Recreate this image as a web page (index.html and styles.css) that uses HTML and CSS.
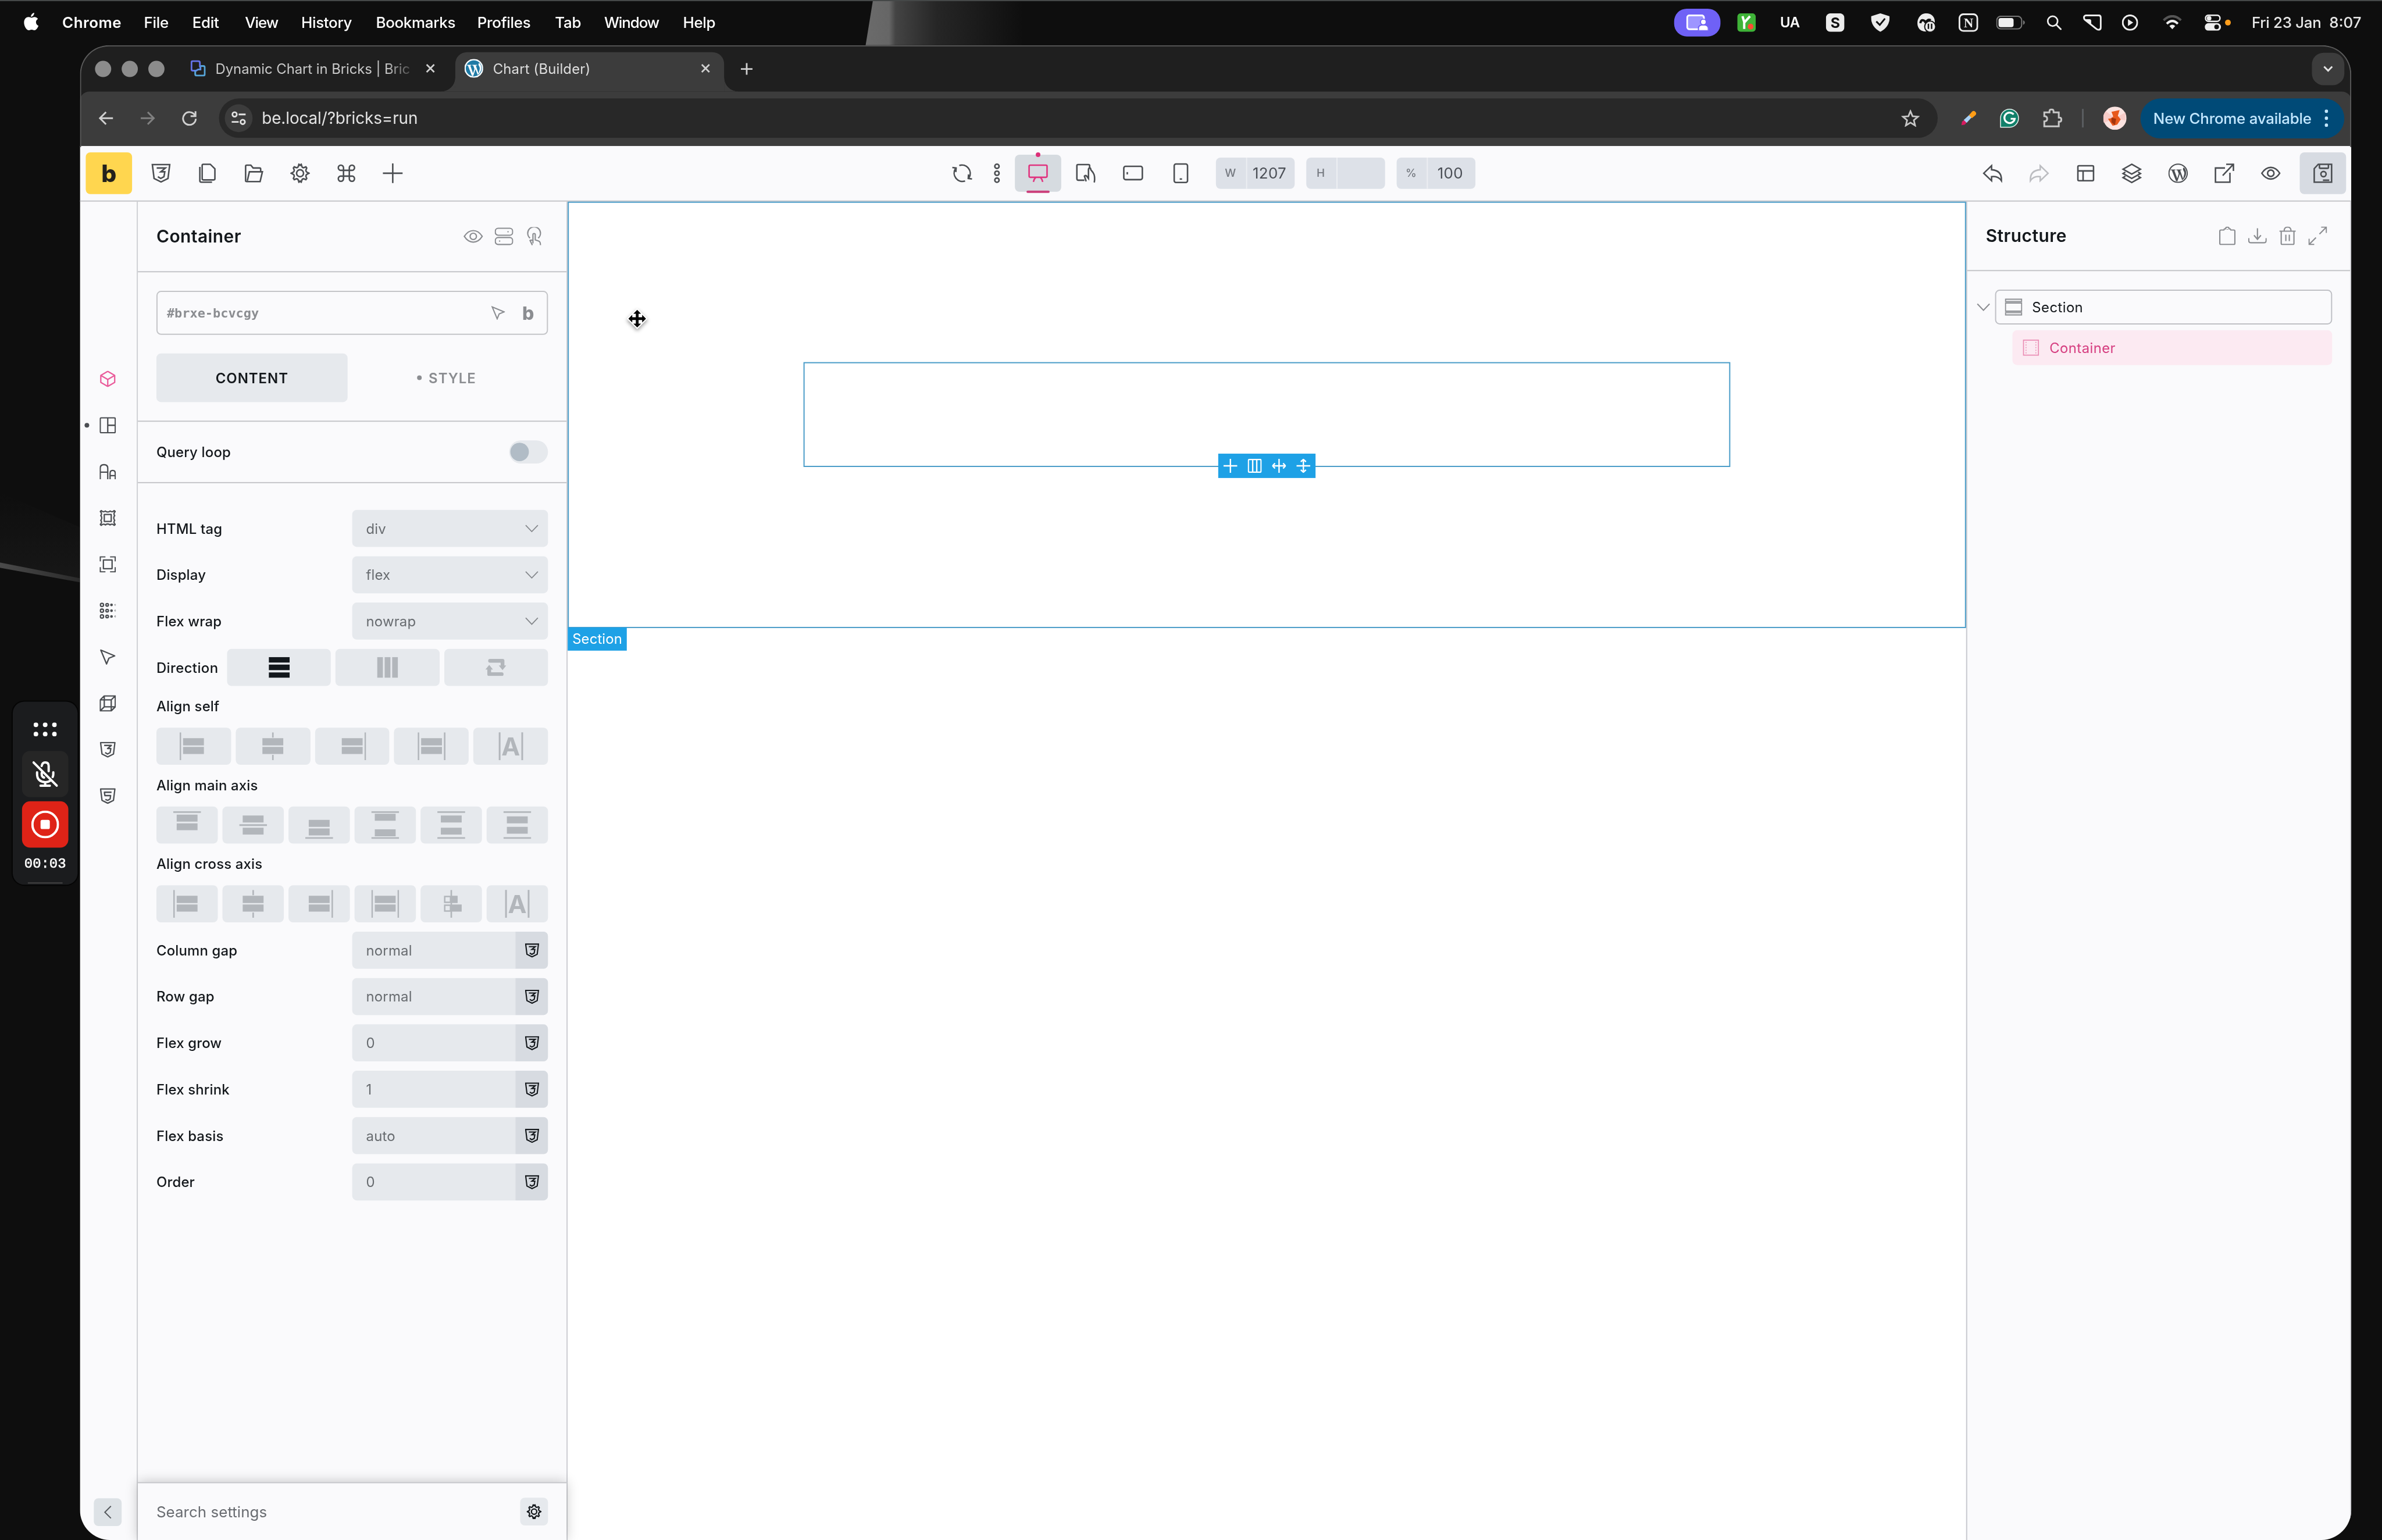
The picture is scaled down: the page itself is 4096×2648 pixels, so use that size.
FILE: index.html
```html
<!DOCTYPE html>
<html lang="en">
<head>
<meta charset="utf-8">
<title>Chart (Builder)</title>
<link rel="stylesheet" href="styles.css">
</head>
<body>
<svg class="defs" aria-hidden="true">
  <symbol id="css3" viewBox="0 0 34 34"><path d="M2 2h30l-3 24-12 6-12-6z"/><path d="M9.500 8h15l-8 6.500h7l-1.500 8.500-5.500 3-5-3"/></symbol>
  <symbol id="html5" viewBox="0 0 34 34"><path d="M2 2h30l-3 24-12 6-12-6z"/><path d="M25 9H10l1 7h12l-1 7-5 3-5-2"/></symbol>
  <symbol id="gear" viewBox="0 0 34 34"><path d="M14 5l1-3.5 2 2 2-2L20 5q1 2.500 3 2.500L27 6l1.500 2L27 11.500q0 2.500 1.500 3.500l4 2-4 2q-1.500 1-1.500 3.500L28.500 26 27 28l-4-1.500q-2 0-3 2.500l-1 3.500-2-2-2 2L14 29q-1-2.500-3-2.500L7 28l-1.500-2L7 22.500Q7 20 5.500 19l-4-2 4-2Q7 14 7 11.500L5.500 8 7 6l4 1.500q2 0 3-2.500z"/><circle cx="17" cy="17" r="6"/></symbol>
  <symbol id="wp" viewBox="0 0 34 34"><circle cx="17" cy="17" r="15.800" stroke-width="2"/><path stroke="none" fill="currentColor" d="M4 10.500h8.500v1.200l-2 .3 5 14 2.600-8L16 12l-2-.3v-1.200h9v1.200l-2.400.3 5 14.500 2-7.500c.8-3-.4-5-1.600-7-1-1.800-.8-4 1-4.800 6 5.500 5 17-3 21.800L20 18.500 15.800 31l-2.400-.5L6.200 12 4 11.700z"/></symbol>
  <symbol id="eye" viewBox="0 0 34 24"><path d="M1.500 12Q8 2 17 2t15.500 10Q26 22 17 22T1.500 12z"/><circle cx="17" cy="12" r="5.500"/></symbol>
  <symbol id="arrowcur" viewBox="0 0 28 28"><path d="M2 2l24 10-10 4-4 10z"/></symbol>
  <symbol id="chev" viewBox="0 0 24 14"><path d="M1.500 1.500L12 12.500 22.500 1.500"/></symbol>
  <symbol id="a-start" viewBox="0 0 48 48"><path d="M0 0h2.700v48H0zM6 10h36v12.500H6zM6 25h36v12.500H6z"/></symbol>
  <symbol id="a-center" viewBox="0 0 48 48"><path d="M22.700 0h2.700v9h-2.700zM22.700 39h2.700v9h-2.700zM6 10h36v12.500H6zM6 25h36v12.500H6z"/></symbol>
  <symbol id="a-end" viewBox="0 0 48 48"><path d="M45.300 0H48v48h-2.700zM6 10h36v12.500H6zM6 25h36v12.500H6z"/></symbol>
  <symbol id="a-stretch" viewBox="0 0 48 48"><path d="M0 0h2.700v48H0zM45.300 0H48v48h-2.700zM6 10h36v12.500H6zM6 25h36v12.500H6z"/></symbol>
  <symbol id="a-first" viewBox="0 0 48 48"><path d="M22.700 0h2.700v48h-2.700zM24 10h11v12.500H24zM24 25h18v12.500H24z"/><path d="M12.700 11.300h10v10h-10zM12.700 26.300h10v10h-10z" fill="none" stroke="currentColor" stroke-width="2.500"/></symbol>
  <symbol id="m-start" viewBox="0 0 48 48"><path d="M0 0h48v3H0zM6 6h36v12H6zM6 21h36v12H6z"/></symbol>
  <symbol id="m-center" viewBox="0 0 48 48"><path d="M0 22.500h48v3H0zM6 7.500h36v12H6zM6 28.500h36v12H6z"/></symbol>
  <symbol id="m-end" viewBox="0 0 48 48"><path d="M0 45h48v3H0zM6 15h36v12H6zM6 30h36v12H6z"/></symbol>
  <symbol id="m-between" viewBox="0 0 48 48"><path d="M0 0h48v3H0zM0 45h48v3H0zM6 4.500h36v12H6zM6 31.500h36v12H6z"/></symbol>
  <symbol id="m-around" viewBox="0 0 48 48"><path d="M0 0h48v3H0zM0 45h48v3H0zM6 7.500h36v12H6zM6 28.500h36v12H6z"/></symbol>
  <symbol id="m-evenly" viewBox="0 0 48 48"><path d="M0 0h48v3H0zM0 45h48v3H0zM6 9h36v12H6zM6 27h36v12H6z"/></symbol>
</svg>

<div class="screen">
  <svg class="wallpaper" viewBox="0 0 4112 2658" preserveAspectRatio="none">
    <defs>
      <linearGradient id="beam" x1="0" x2="1"><stop offset="0" stop-color="#6b6b6b"/><stop offset=".15" stop-color="#666"/><stop offset=".19" stop-color="#444"/><stop offset=".45" stop-color="#262626"/><stop offset="1" stop-color="#0e0e0e"/></linearGradient>
      <linearGradient id="trail" x1="0" x2="1"><stop offset="0" stop-color="#4a4a4a"/><stop offset="1" stop-color="#2a2a2a"/></linearGradient>
      <linearGradient id="glow" x1="0" x2="0" y1="0" y2="1"><stop offset="0" stop-color="#0e0e0e"/><stop offset="1" stop-color="#171717"/></linearGradient>
    </defs>
    <path d="M1507 0h260v80h-273z" fill="url(#beam)"/>
    <path d="M0 850l138 60v88L0 972z" fill="url(#glow)"/>
    <path d="M0 971l138 27v7L0 980z" fill="url(#trail)"/>
    <path d="M0 0h4112v2H0z" fill="#454848"/>
  </svg>

  <header class="menubar">
    <nav class="menus">
      <svg class="apple" viewBox="0 0 26 31"><path d="M18 0c.3 3-2.200 6.800-5.600 6.900C12 4 15 .5 18 0zM13.500 8.600c1.200 0 2.700-1.300 5-1.300 2 0 4.500 1 6 3.200-5 2.900-4.300 9.800.9 12-1 2.900-3.900 7.800-6.800 7.800-1.800 0-2.700-1.100-5-1.100s-3.300 1.100-5 1.100C4.800 30.300.5 23.500.5 17 .5 10.500 4.500 7.400 8.300 7.400c2.200 0 3.900 1.200 5.200 1.200z" fill="#fff"/></svg>
      <b>Chrome</b><span>File</span><span>Edit</span><span class="tight">View</span><span>History</span><span>Bookmarks</span><span>Profiles</span><span>Tab</span><span class="tight">Window</span><span>Help</span>
    </nav>
    <div class="status">
      <span class="share"><svg width="38" height="28" viewBox="0 0 38 28"><rect x="1.500" y="1.500" width="29" height="24" rx="4" fill="#9d95ff" stroke="#fff" stroke-width="3"/><g fill="#fff" stroke="#6f61f6" stroke-width="2"><path d="M21 28v-4q0-6 8.500-6t8.500 6v4z"/><circle cx="29.500" cy="13" r="5"/></g></svg></span>
      <svg width="32" height="32" viewBox="0 0 32 32"><rect width="32" height="32" rx="6" fill="#3fb338"/><path d="M9 5l3 10M22 5L12 16v11" stroke="#fff" stroke-width="4" fill="none"/><circle cx="23" cy="23" r="5" fill="#ff4b34"/></svg>
      <b class="ua">UA</b>
      <svg width="32" height="32" viewBox="0 0 32 32"><rect width="32" height="32" rx="8" fill="#ececec"/><text x="16" y="25" text-anchor="middle" class="ico-s">S</text></svg>
      <svg width="32" height="32" viewBox="0 0 32 32"><path d="M16 0l16 5q1 18-16 27Q-1 23 0 5z" fill="#ececec"/><path d="M9 14l6 6 9-11" stroke="#111" stroke-width="3" fill="none"/></svg>
      <svg width="34" height="32" viewBox="0 0 34 32"><path d="M17 0C27 0 32 7 32 14v3H20v14C9 33 2 27 2 17 2 8 8 0 17 0z" fill="#ececec"/><path d="M7 17q1-6 5-5t4 5q3-8 9-5" stroke="#111" stroke-width="4" fill="none"/><circle cx="24" cy="23" r="9.500" fill="#ececec" stroke="#111" stroke-width="2"/><path d="M21 18v9M26.500 18v9" stroke="#111" stroke-width="2.500"/></svg>
      <svg width="34" height="32" viewBox="0 0 34 32"><rect x="1.500" y="1.500" width="31" height="29" rx="7" fill="#111" stroke="#ececec" stroke-width="3"/><text x="17" y="24" text-anchor="middle" class="ico-n">N</text></svg>
      <svg width="50" height="24" viewBox="0 0 50 24"><rect x="1" y="1" width="43" height="22" rx="7" fill="none" stroke="#777" stroke-width="2"/><rect x="4" y="4" width="26" height="16" rx="4" fill="#f0f0f0"/><path d="M46.500 8q3 1.500 3 4t-3 4z" fill="#777"/></svg>
      <svg width="26" height="26" viewBox="0 0 26 26" fill="none" stroke="#eee" stroke-width="2.800" stroke-linecap="round"><circle cx="10.500" cy="10.500" r="8.500"/><path d="M17 17l7.500 7.500"/></svg>
      <svg width="32" height="28" viewBox="0 0 32 28"><path d="M5 1.500h22q3.500 0 3.500 4v17q0 4-4 4-2 0-4-2L3 9Q1.500 7.500 1.500 5T5 1.500z" fill="none" stroke="#eee" stroke-width="3"/><path d="M2 8h9q3 0 3 3v7z" fill="#eee"/></svg>
      <svg width="28" height="28" viewBox="0 0 28 28"><circle cx="14" cy="14" r="12.500" fill="none" stroke="#eee" stroke-width="3"/><path d="M10.500 8v12l9-6z" fill="#eee"/></svg>
      <svg width="34" height="26" viewBox="0 0 34 26" fill="none" stroke-width="4"><path d="M2 9Q17-5 32 9" stroke="#555"/><path d="M7.500 15Q17 5.500 26.500 15" stroke="#eee"/><path d="M12 19q5-4.500 10 0l-5 5.500z" fill="#eee"/></svg>
      <svg width="28" height="28" viewBox="0 0 28 28"><rect x="1.300" y="1.300" width="25" height="10.500" rx="5.200" fill="none" stroke="#eee" stroke-width="2.500"/><circle cx="7.500" cy="6.500" r="4" fill="#eee"/><rect y="15" width="28" height="13" rx="6.500" fill="#eee"/><circle cx="20.500" cy="21.500" r="4" fill="#111"/></svg>
      <i class="dot-orange"></i>
      <span class="date">Fri 23 Jan</span><span class="time">8:07</span>
    </div>
  </header>

  <main class="window">
    <div class="tabstrip">
      <i class="light"></i><i class="light"></i><i class="light"></i>
      <div class="tab">
        <svg width="26" height="28" viewBox="0 0 26 28" fill="none" stroke-width="3"><path d="M10 18H4q-2.500 0-2.500-2.500V4Q1.500 1.500 4 1.500h8.500Q16 1.500 16 4v8" stroke="#6472e8"/><path d="M8 17v7q0 2.500 2.500 2.500H22q2.500 0 2.500-2.500V12.500Q24.500 10 22 10h-5" stroke="#56a5d8"/><path d="M8 19l5-3h4v-5" stroke="#5d8ee0"/></svg>
        <span class="tab-title faded">Dynamic Chart in Bricks | Bric</span>
        <svg class="x" width="16" height="16" viewBox="0 0 16 16"><path d="M1.500 1.500l13 13M14.500 1.500l-13 13"/></svg>
      </div>
      <div class="tab active">
        <svg class="fav" width="32" height="32" viewBox="0 0 34 34"><circle cx="17" cy="17" r="17" fill="#1f7ba6"/><use href="#wp" width="34" height="34"/></svg>
        <span class="tab-title">Chart (Builder)</span>
        <svg class="x" width="16" height="16" viewBox="0 0 16 16"><path d="M1.500 1.500l13 13M14.500 1.500l-13 13"/></svg>
      </div>
      <svg class="x newtab" width="22" height="22" viewBox="0 0 22 22"><path d="M11 1v20M1 11h20"/></svg>
      <span class="tabmenu"><svg width="18" height="12" viewBox="0 0 18 12"><path d="M2 2l7 7 7-7"/></svg></span>
    </div>

    <div class="navbar">
      <svg class="nav" width="26" height="26" viewBox="0 0 26 26"><path d="M25 13H3M13 2.500L2.500 13 13 23.500"/></svg>
      <svg class="nav dim" width="26" height="26" viewBox="0 0 26 26"><path d="M1 13h22M13 2.500L23.500 13 13 23.500"/></svg>
      <svg class="nav" width="26" height="26" viewBox="0 0 26 26"><path d="M22.500 8A11 11 0 1 0 24 14M23.500 1v8.500H15"/></svg>
      <div class="address">
        <span class="siteinfo"><svg width="26" height="24" viewBox="0 0 26 24" fill="none" stroke="#e3e3e3" stroke-width="2.800"><circle cx="6" cy="5.500" r="3.800"/><path d="M13 5.500h12M1 18.500h12"/><circle cx="20" cy="18.500" r="3.800"/></svg></span>
        <span class="url">be.local/?bricks=run</span>
        <svg width="32" height="30" viewBox="0 0 32 30" fill="none" stroke="#c7c7c7" stroke-width="2.800"><path d="M16 3l3.600 8.600 9.400.8-7.200 6.100 2.200 9.100-8-4.900-8 4.900 2.200-9.100L3 12.400l9.400-.8z"/></svg>
      </div>
      <svg class="ext-pen" width="28" height="28" viewBox="0 0 28 28"><path d="M2 26l1-6 5-4 4 4-4 5z" fill="#d81b60"/><path d="M6 17L17 7l4 4-10 11z" fill="#a9d2f7"/><path d="M15 9l5-6q3-3 6 0t0 6l-6 5z" fill="#ff9d16"/></svg>
      <svg class="ext-g" width="34" height="34" viewBox="0 0 34 34"><path d="M17 1.500A15.500 15.500 0 1 1 17 32.500H1.500V17A15.500 15.500 0 0 1 17 1.500z" fill="#12806a" stroke="#e8f6f2" stroke-width="1.500"/><path d="M24 10.500A9 9 0 1 0 26 18h-7" fill="none" stroke="#fff" stroke-width="3.200"/></svg>
      <svg class="ext-p" width="34" height="34" viewBox="0 0 34 34"><path d="M3 7h9V5q0-3 3.500-3T19 5v2h9v9h1.500q3 0 3 3.500t-3 3.500H28v8H3v-8.500q5 0 5-4.500t-5-4.500z" fill="none" stroke="#c7c7c7" stroke-width="3"/></svg>
      <i class="sep"></i>
      <svg class="avatar" width="40" height="40" viewBox="0 0 40 40"><circle cx="20" cy="20" r="20" fill="#fbe3e0"/><path d="M20 20L4 8a20 20 0 0 0-3 20zM20 20L38 10v14z" fill="#f8ccc8"/><path d="M14 9l14-3-3 10 5 6-6 9-8 2-4-6-4-6 6-1 3-3z" fill="#e8591c"/><path d="M14 19l8 2-2 11-6-5z" fill="#a2340c"/></svg>
      <div class="update"><span>New Chrome available</span><svg width="6" height="30" viewBox="0 0 6 30" fill="#c2e7ff"><circle cx="3" cy="3" r="3"/><circle cx="3" cy="15" r="3"/><circle cx="3" cy="27" r="3"/></svg></div>
    </div>

    <div class="builder">
      <div class="topbar">
        <div class="group">
          <span class="logo">b</span>
          <span class="tool"><svg><use href="#css3"/></svg></span>
          <span class="tool"><svg viewBox="0 0 34 34"><path d="M10 1.500h12l8 8v17q0 2-2 2H10q-2 0-2-2v-23q0-2 2-2z"/><path d="M4 6v24q0 2.500 2.500 2.500H25"/></svg></span>
          <span class="tool"><svg viewBox="0 0 34 34"><path d="M3 30V5q0-2 2-2h7l4 5h11q2 0 2 2v3M3 30q0 1.500 2 1.500h23l4-17H9.500L6 30"/></svg></span>
          <span class="tool"><svg><use href="#gear"/></svg></span>
          <span class="tool"><svg viewBox="0 0 34 34"><path d="M12 12H8a4.500 4.500 0 1 1 4-4.500v19A4.500 4.500 0 1 1 8 22h18a4.500 4.500 0 1 1-4 4.500v-19A4.500 4.500 0 1 1 26 12z"/></svg></span>
          <span class="tool"><svg viewBox="0 0 34 34"><path d="M17 0v34M0 17h34"/></svg></span>
        </div>
        <div class="group mid">
          <span class="tool w60"><svg viewBox="0 0 34 34"><path d="M12 3.500a14.500 14.500 0 0 1 17 21M22 30.500a14.500 14.500 0 0 1-17-21M0 7l6.500 1L6 15M34 27l-6.500-1 .5-7"/></svg></span>
          <span class="tool w60"><svg viewBox="0 0 34 34"><circle cx="17" cy="5" r="3.700"/><circle cx="17" cy="17" r="3.700"/><circle cx="17" cy="29" r="3.700"/></svg></span>
          <span class="tool device"><svg viewBox="0 0 34 34"><rect x="1.500" y="3" width="31" height="21" rx="2"/><path d="M9 32q1-5 4-8M25 32q-1-5-4-8"/></svg></span>
          <span class="tool"><svg viewBox="0 0 34 34"><path d="M24 7V4q0-2-2-2H4Q2 2 2 4v22q0 3 2 3h11M18 31l-3-9q2-2 4 0l3 4V11q0-3 2-3t2 3l4 5q4 6 2 17"/></svg></span>
          <span class="tool"><svg viewBox="0 0 34 34"><rect x="1" y="5" width="32" height="23" rx="3"/><path d="M7 15v4"/></svg></span>
          <span class="tool"><svg viewBox="0 0 34 34"><rect x="6" y="1" width="23" height="32" rx="3"/><path d="M15.500 27h4"/></svg></span>
          <label class="dim-field"><small>W</small><span>1207</span></label>
          <label class="dim-field"><small>H</small><span></span></label>
          <label class="dim-field"><small>%</small><span>100</span></label>
        </div>
        <div class="group right">
          <span class="tool"><svg viewBox="0 0 34 34"><path d="M15 4L1.500 17 15 30v-7q11-2 17 7Q33 12 15 11z"/></svg></span>
          <span class="tool faint"><svg viewBox="0 0 34 34"><path d="M19 4l13.500 13L19 30v-7q-11-2-17 7Q1 12 19 11z"/></svg></span>
          <span class="tool"><svg viewBox="0 0 34 34"><rect x="4" y="4" width="27" height="26" rx="2"/><path d="M4 13h27M13 13v17"/></svg></span>
          <span class="tool"><svg viewBox="0 0 34 34"><path d="M17 1.500L32 10l-15 8.500L2 10zM6 15l-4 2.500L17 26l15-8.500-4-2.500M6 22l-4 2.500L17 33l15-8.500-4-2.500"/></svg></span>
          <span class="tool"><svg><use href="#wp"/></svg></span>
          <span class="tool"><svg viewBox="0 0 34 34"><path d="M18 8H1.500v24.500h25V16M14 21L32 2M20 1.500h12.500V13"/></svg></span>
          <span class="tool"><svg viewBox="0 0 34 34"><use href="#eye" y="5" width="34" height="24"/></svg></span>
          <span class="tool save"><svg viewBox="0 0 34 34"><path d="M9 1.500h23v31H2V9zM11 2v5q0 1.500 1.500 1.500H25q1.500 0 1.500-1.500V2M17 29h11"/><circle cx="18" cy="18.500" r="4.500"/></svg></span>
        </div>
      </div>

      <div class="work">
        <aside class="rail">
          <span class="rail-item pink"><svg viewBox="0 0 28 28"><path d="M14 1l12 7v12l-12 7-12-7V8zM2 8l12 7 12-7M14 15v12"/></svg></span>
          <span class="rail-item marked"><svg viewBox="0 0 28 28"><rect x="1" y="1" width="26" height="26" rx="2"/><path d="M14 1v26M14 14h13"/></svg></span>
          <span class="rail-item"><svg viewBox="0 0 28 28"><path d="M1 27V8q0-6 6.500-6T14 8v19M1 15h13M18 27V17q0-5 4.500-5t4.500 5v10M18 21h9"/></svg></span>
          <span class="rail-item"><svg viewBox="0 0 28 28"><path d="M3 1a4 3 0 0 0 7 1a5 4 0 0 0 8 0a4 3 0 0 0 7-1l2 2a3 4 0 0 0-1 7a4 5 0 0 0 0 8a3 4 0 0 0 1 7l-2 2a4 3 0 0 0-7-1a5 4 0 0 0-8 0a4 3 0 0 0-7 1l-2-2a3 4 0 0 0 1-7a4 5 0 0 0 0-8a3 4 0 0 0-1-7z"/><rect x="8" y="8" width="12" height="12"/></svg></span>
          <span class="rail-item"><svg viewBox="0 0 28 28"><rect x="6.500" y="6.500" width="15" height="15"/><path d="M1 9V1h9M18 1h9v8M27 19v8h-9M10 27H1v-8"/></svg></span>
          <span class="rail-item"><svg viewBox="0 0 28 28"><g id="dotrow"><circle cx="4" cy="4" r="2.800"/><circle cx="13" cy="4" r="2.200"/><circle cx="20.500" cy="4" r="1.200"/><circle cx="27" cy="4" r=".3"/></g><use href="#dotrow" y="10"/><use href="#dotrow" y="20"/></svg></span>
          <span class="rail-item"><svg><use href="#arrowcur"/></svg></span>
          <span class="rail-item"><svg viewBox="0 0 28 28"><path d="M1 8L8 1h19v19l-7 7H1zM1 8h19v19M20 8l7-7M8 1v19h19M8 20l-7 7"/></svg></span>
          <span class="rail-item"><svg><use href="#css3"/></svg></span>
          <span class="rail-item"><svg><use href="#html5"/></svg></span>
          <span class="collapse"><svg width="14" height="24" viewBox="0 0 14 24"><path d="M12.500 1.500L2 12l10.500 10.500"/></svg></span>
        </aside>

        <section class="panel">
          <div class="panel-head"><h2>Container</h2>
            <svg width="34" height="24"><use href="#eye"/></svg>
            <svg width="32" height="32" viewBox="0 0 32 32"><rect x="1" y="2" width="30" height="12" rx="5"/><rect x="1" y="18" width="30" height="12" rx="5"/><path d="M23 7v2M8.500 23v2"/></svg>
            <svg width="32" height="32" viewBox="0 0 32 32"><path d="M9 19a11 11 0 1 1 14 0M14 28V13q0-2 2-2t2 2v9l6 2q3 1 3 7M14 23q-3-1-5 0 2 4 4 8"/></svg>
          </div>
          <div class="panel-id">
            <div class="idbox"><code>#brxe-bcvcgy</code><svg width="24" height="24"><use href="#arrowcur"/></svg><b>b</b></div>
            <div class="modes"><span class="mode on">CONTENT</span><span class="mode off">STYLE</span></div>
          </div>
          <div class="query"><span>Query loop</span><i class="switch"></i></div>
          <div class="controls">
            <div class="row"><span>HTML tag</span><div class="field">div<svg width="24" height="14"><use href="#chev"/></svg></div></div>
            <div class="row"><span>Display</span><div class="field">flex<svg width="24" height="14"><use href="#chev"/></svg></div></div>
            <div class="row"><span>Flex wrap</span><div class="field">nowrap<svg width="24" height="14"><use href="#chev"/></svg></div></div>
            <div class="row"><span class="lab-dir">Direction</span><div class="btns">
              <i class="chosen"><svg width="36" height="36"><path d="M0 0h36v9.500H0zM0 13h36v9.500H0zM0 26.500h36V36H0z"/></svg></i>
              <i><svg width="36" height="36"><path d="M0 0h10v36H0zM13 0h10v36H13zM26 0h10v36H26z"/></svg></i>
              <i><svg width="36" height="30" viewBox="0 0 36 30"><path d="M8 3.500h21.500V12M28 26.500H6.500V18" fill="none" stroke="currentColor" stroke-width="6.500" stroke-linejoin="round" stroke-linecap="round"/><path d="M23 11.500h13l-6.500 8zM0 18.500h13l-6.500-8z"/></svg></i>
            </div></div>
            <div class="label">Align self</div>
            <div class="btns full"><i><svg><use href="#a-start"/></svg></i><i><svg><use href="#a-center"/></svg></i><i><svg><use href="#a-end"/></svg></i><i><svg><use href="#a-stretch"/></svg></i><i><span class="glyph">A</span></i></div>
            <div class="label">Align main axis</div>
            <div class="btns full"><i><svg><use href="#m-start"/></svg></i><i><svg><use href="#m-center"/></svg></i><i><svg><use href="#m-end"/></svg></i><i><svg><use href="#m-between"/></svg></i><i><svg><use href="#m-around"/></svg></i><i><svg><use href="#m-evenly"/></svg></i></div>
            <div class="label">Align cross axis</div>
            <div class="btns full last"><i><svg><use href="#a-start"/></svg></i><i><svg><use href="#a-center"/></svg></i><i><svg><use href="#a-end"/></svg></i><i><svg><use href="#a-stretch"/></svg></i><i><svg><use href="#a-first"/></svg></i><i><span class="glyph">A</span></i></div>
            <div class="row"><span>Column gap</span><div class="field var">normal<i><svg><use href="#css3"/></svg></i></div></div>
            <div class="row"><span>Row gap</span><div class="field var">normal<i><svg><use href="#css3"/></svg></i></div></div>
            <div class="row"><span>Flex grow</span><div class="field var">0<i><svg><use href="#css3"/></svg></i></div></div>
            <div class="row"><span>Flex shrink</span><div class="field var">1<i><svg><use href="#css3"/></svg></i></div></div>
            <div class="row"><span>Flex basis</span><div class="field var">auto<i><svg><use href="#css3"/></svg></i></div></div>
            <div class="row"><span>Order</span><div class="field var">0<i><svg><use href="#css3"/></svg></i></div></div>
          </div>
          <div class="search"><span>Search settings</span><i><svg width="26" height="26"><use href="#gear"/></svg></i></div>
        </section>

        <section class="canvas">
          <div class="outline-section">
            <div class="outline-container">
              <div class="actions">
                <svg viewBox="0 0 24 24"><path d="M12 0v24M0 12h24"/></svg>
                <svg viewBox="0 0 24 24"><rect x="1" y="1" width="22" height="22" rx="2"/><path d="M8.500 1v22M15.500 1v22"/></svg>
                <svg viewBox="0 0 24 24"><path d="M12 0v24M1 12h22M5 7.500L1 12l4 4.500M19 7.500l4 4.500-4 4.500"/></svg>
                <svg viewBox="0 0 24 24"><path d="M0 12h24M12 1v22M7.500 5L12 1l4.500 4M7.500 19l4.500 4 4.500-4"/></svg>
              </div>
            </div>
            <span class="tag">Section</span>
            <svg class="cursor" viewBox="0 0 40 40"><path d="M20 1l19 19-19 19L1 20z" fill="#fff"/><path d="M20 4l7 7h-4.500v6.500H29V13l7 7-7 7v-4.500h-6.500V29H27l-7 7-7-7h4.500v-6.500H11V27l-7-7 7-7v4.500h6.500V11H13z" fill="#000"/></svg>
          </div>
        </section>

        <aside class="structure">
          <div class="panel-head"><h2>Structure</h2>
            <svg width="32" height="32" viewBox="0 0 32 32"><path d="M10 6H5q-2 0-2 2v21q0 2 2 2h22q2 0 2-2V8q0-2-2-2h-5l-1-2h-2q0-3-3-3t-3 3h-2zM16 4.500v1"/></svg>
            <svg width="32" height="32" viewBox="0 0 32 32"><path d="M16 3v19M10 15l6 7 6-7M1 20v4q0 4 4 4h22q4 0 4-4v-4"/></svg>
            <svg width="32" height="32" viewBox="0 0 32 32"><path d="M2 8h28M5 8v21q0 2 2 2h18q2 0 2-2V8M10 8q0-7 6-7t6 7M13 14v11M19 14v11"/></svg>
            <svg width="32" height="32" viewBox="0 0 32 32"><path d="M19 13L31 1M22 1h9v10M13 19L1 31M1 21v10h9"/></svg>
          </div>
          <div class="tree">
            <div class="node"><svg class="fold" width="24" height="14"><use href="#chev"/></svg><div class="item"><svg width="30" height="30" viewBox="0 0 30 30"><path d="M1 1.500h28v4H1zM1 8h28v14H1zM1 24.500h28v4H1z"/></svg>Section</div></div>
            <div class="item child"><svg width="28" height="28" viewBox="0 0 28 28"><path d="M1 1h26v26H1z"/><path d="M5.500 4v21M22.500 4v21" stroke-dasharray="2 2.500" stroke-width="1.500"/></svg>Container</div>
          </div>
        </aside>
      </div>
    </div>
  </main>

  <div class="recorder">
    <svg width="40" height="24" viewBox="0 0 40 24" fill="#fff"><circle cx="4" cy="4" r="4"/><circle cx="20" cy="4" r="4"/><circle cx="36" cy="4" r="4"/><circle cx="4" cy="20" r="4"/><circle cx="20" cy="20" r="4"/><circle cx="36" cy="20" r="4"/></svg>
    <span class="mic"><svg width="44" height="44" viewBox="0 0 44 44" fill="none" stroke="#fff" stroke-width="4" stroke-linecap="round"><path d="M2 2l40 40M16 8q1-6 6-6 6 0 6 6v9M16 20v2q0 5 4 6M8 19v3q0 13 14 14 5 0 8-2M36 19v3q0 3-1 5M22 36v6M14 42h16"/></svg></span>
    <span class="stop"><svg width="48" height="48" viewBox="0 0 48 48"><circle cx="24" cy="24" r="22" fill="none" stroke="#fff" stroke-width="4"/><rect x="16" y="16" width="16" height="16" rx="3" fill="#fff"/></svg></span>
    <time>00:03</time>
    <i class="grip"></i>
  </div>
</div>
</body>
</html>
```
FILE: styles.css
```css
* { box-sizing: border-box; }
html { background: #0e0e0e; overflow: hidden; }
body { margin: 0; font-family: Inter, "Liberation Sans", sans-serif; overflow: hidden; width: 4096px; height: 2648px; }
i { font-style: normal; }
svg { display: block; flex: none; }
.defs { position: absolute; width: 0; height: 0; }
.screen {
  position: relative; width: 4112px; height: 2658px; overflow: hidden;
  background: #0e0e0e; transform: scale(.99611, .99624); transform-origin: 0 0;
}
.wallpaper { position: absolute; inset: 0; width: 4112px; height: 2658px; }

/* macOS menu bar */
.menubar { position: relative; height: 78px; padding-bottom: 1px; display: flex; justify-content: space-between; color: #fff; font-size: 26px; font-weight: 500; letter-spacing: -.3px; white-space: nowrap; }
.menus { display: grid; align-items: center; padding-left: 41px; grid-template-columns: 66.500px 141px 83.500px 91px 97px 129px 175px 134px 85px 136px 80px; }
.menus b { font-weight: 600; letter-spacing: .5px; }
.menus .tight { letter-spacing: -1.100px; }
.apple { width: 26px; height: 31px; margin-top: -3px; }
.status { display: grid; align-items: center; grid-template-columns: 109px 74px 79px 78px 78px 73px 65px 87px 63px 67px 70px 73px 35px 46px 134px 91px; }
.share { width: 80px; height: 48px; border-radius: 22px; background: #6f61f6; display: grid; place-items: center; }
.ua { font-size: 24px; font-weight: 600; letter-spacing: -.5px; }
.ico-s { font: 700 25px Inter, sans-serif; fill: #111; }
.ico-n { font: 700 23px "Liberation Serif", serif; fill: #ececec; }
.dot-orange { width: 10px; height: 10px; border-radius: 50%; background: #ff9d1b; }
.date, .time { color: #e6e6e6; font-weight: 500; }
.time { letter-spacing: 0; }

/* browser window */
.window { position: relative; margin-left: 138px; width: 3921px; height: 2580px; border-radius: 50px 50px 52px 52px; overflow: hidden; background: #1f1f1f; }
.window::after { content: ""; position: absolute; inset: 0 0 auto; height: 174px; border: 2px solid #5b5b5b; border-bottom: 0; border-radius: 50px 50px 0 0; }
.tabstrip { height: 80px; display: flex; align-items: center; padding: 2px 12px 0 26px; background: #1f1f1f; }
.light { width: 28px; height: 28px; border-radius: 50%; background: #8c8c8c; margin-right: 18px; }
.tab { display: flex; align-items: center; width: 424px; margin-left: 27px; margin-right: 33px; height: 68px; padding-bottom: 2px; font-size: 24px; color: #c8c8c8; letter-spacing: -.08px; }
.tab-title { flex: 1; margin-left: 17px; white-space: nowrap; }
.faded { -webkit-mask-image: linear-gradient(90deg, #000 86%, rgba(0, 0, 0, .15)); mask-image: linear-gradient(90deg, #000 86%, rgba(0, 0, 0, .15)); }
.tab:not(.active) .tab-title { flex: none; width: 342px; margin-right: 21px; }
.tab.active { position: relative; width: 464px; margin: 10px 0 0; height: 68px; align-self: flex-start; padding: 0 24px 12px 16px; background: #3c3c3c; border-radius: 20px 20px 0 0; color: #dedede; letter-spacing: .15px; }
.tab.active::before, .tab.active::after { content: ""; position: absolute; bottom: 0; width: 24px; height: 24px; background: radial-gradient(circle at 0 0, transparent 23.500px, #3c3c3c 24px); left: -24px; }
.tab.active::after { left: auto; right: -24px; transform: scaleX(-1); }
.fav { color: #fff; fill: none; stroke: #fff; }
.x { fill: none; stroke: #d0d0d0; stroke-width: 2.800; }
.newtab { margin-left: 28px; }
.tabmenu { margin-left: auto; width: 56px; height: 56px; border-radius: 20px; background: #3c3c3c; display: grid; place-items: center; fill: none; stroke: #e3e3e3; stroke-width: 3; }
.navbar { height: 94px; display: flex; align-items: center; background: #3c3c3c; border-radius: 16px 16px 0 0; padding: 0 12px 2px 32px; }
.nav { fill: none; stroke: #d0d0d0; stroke-width: 3; margin-right: 46px; }
.nav.dim { stroke: #808080; }
.nav:nth-child(3) { margin-right: 38px; }
.address { width: 2970px; height: 68px; border-radius: 34px; background: #282828; display: flex; align-items: center; padding: 0 31px 0 10px; }
.siteinfo { width: 48px; height: 48px; border-radius: 50%; background: #3c3c3c; display: grid; place-items: center; }
.url { flex: 1; margin-left: 16px; font-size: 28px; letter-spacing: -.12px; color: #e3e3e3; }
.ext-pen { margin-left: 39px; }
.ext-g { margin-left: 40px; }
.ext-p { margin-left: 40px; }
.sep { width: 3px; height: 32px; background: #5a5d60; margin: 0 34px 0 34px; }
.avatar { margin-right: 24px; }
.update { width: 352px; height: 69px; border-radius: 35px; background: #004a77; color: #c2e7ff; display: flex; align-items: center; padding-left: 22px; font-size: 26px; font-weight: 500; letter-spacing: -.25px; white-space: nowrap; }
.update svg { margin-left: 23px; }

/* builder */
.builder { height: 2406px; background: #fafafc; color: #14181c; }
.topbar { height: 96px; border-bottom: 2px solid #c4c5c9; display: flex; position: relative; }
.group { display: flex; align-items: center; padding-left: 10px; }
.group.mid { position: absolute; left: 1493px; top: 0; height: 94px; padding: 0; }
.group.right { margin-left: auto; padding: 0 9px 0 0; }
.tool { width: 80px; height: 72px; display: grid; place-items: center; }
.tool svg { width: 34px; height: 34px; fill: none; stroke: #4b4e52; color: #4b4e52; stroke-width: 2.600; overflow: visible; }
.w60 { width: 60px; }
.w60:nth-child(2) { margin-right: 1px; }
.mid .tool:nth-child(n+4) { margin-left: 2px; }
.faint svg { stroke: #bcbdc1; }
.logo { width: 80px; height: 72px; margin-right: 10px; border-radius: 8px; background: #ffd64f; display: grid; place-items: center; font-size: 41px; line-height: 72px; font-weight: 800; color: #23211c; }
.device { position: relative; height: 64px; border-radius: 8px; background: #d6dbe0; }
.device svg { stroke: #e0347f; }
.device::before { content: ""; position: absolute; left: 36px; top: -4px; width: 8px; height: 8px; border-radius: 50%; background: #dc2f78; }
.device::after { content: ""; position: absolute; left: 20px; bottom: -2px; width: 40px; height: 4px; border-radius: 2px; background: #cb3f7b; }
.dim-field { display: flex; width: 136px; height: 54px; border-radius: 8px; background: #dde1e8; margin-left: 20px; line-height: 54px; }
.tool + .dim-field { margin-left: 21px; }
.dim-field small { width: 54px; text-align: center; padding-right: 2px; border-right: 2px solid #eceef2; font-size: 19px; font-weight: 500; color: #74787f; }
.dim-field span { flex: 1; text-align: center; font-size: 26px; color: #4b4f56; letter-spacing: .3px; padding-right: 5px; }
.save { margin-left: 10px; border-radius: 8px; background: #d7dbe2; }
.work { display: flex; height: 2310px; }

.rail { width: 100px; border-right: 2px solid #d0d1d5; padding-top: 266px; display: flex; flex-direction: column; align-items: center; }
.rail-item { position: relative; height: 80px; width: 96px; right: 1px; display: grid; place-items: center; }
.rail-item svg { width: 28px; height: 28px; fill: none; stroke: #4b4e52; stroke-width: 2.300; stroke-linejoin: round; }
.rail-item use[href="#css3"], .rail-item use[href="#html5"] { stroke-width: 2.800; }
.rail-item.pink svg { stroke: #ea5c9b; }
.marked::before { content: ""; position: absolute; left: 8px; top: 36px; width: 8px; height: 8px; border-radius: 50%; background: #4b4e52; }
.collapse { margin-top: auto; margin-bottom: 24px; margin-right: 2px; width: 48px; height: 48px; border-radius: 8px; background: #dde2e6; display: grid; place-items: center; fill: none; stroke: #55595d; stroke-width: 2; }

.panel { width: 742px; border-right: 2px solid #c9cacf; display: flex; flex-direction: column; font-size: 24px; font-weight: 500; letter-spacing: .18px; }
.panel-head { height: 122px; border-bottom: 2px solid #c4c5c9; padding: 0 40px 0 32px; display: flex; align-items: center; gap: 20px; fill: none; stroke: #8b8d91; stroke-width: 2.200; }
.panel-head h2 { flex: 1; margin: 0; font-size: 30px; font-weight: 600; letter-spacing: .45px; }
.panel-id { height: 258px; padding: 32px 32px 0; border-bottom: 2px solid #c4c5c9; }
.idbox { height: 76px; border: 2px solid #c4c5c8; border-radius: 8px; display: flex; align-items: center; padding: 0 22px 0 16px; color: #8b8d91; fill: none; stroke: #8b8d91; stroke-width: 2.400; }
.idbox code { flex: 1; font: 700 22px "DejaVu Sans Mono", monospace; letter-spacing: 0; }
.idbox b { font-size: 32px; font-weight: 800; margin-left: 30px; letter-spacing: 0; }
.modes { display: flex; margin-top: 32px; height: 84px; font-weight: 600; letter-spacing: 1px; }
.mode { display: flex; align-items: center; justify-content: center; border-radius: 8px; }
.mode.on { width: 330px; background: #e6e9ed; }
.mode.off { flex: 1; color: #8b8d91; padding-right: 4px; }
.mode.off::before { content: ""; width: 8px; height: 8px; border-radius: 50%; background: #8b8d91; margin-right: 12px; }
.query { height: 106px; border-bottom: 2px solid #c4c5c9; display: flex; align-items: center; justify-content: space-between; padding: 0 32px; }
.switch { width: 67px; height: 40px; border-radius: 20px; background: #e6e9ed; padding: 4px 2px; }
.switch::before { content: ""; display: block; width: 32px; height: 32px; border-radius: 50%; background: #b1bcc6; }
.controls { padding: 46px 32px 0; flex: 1; }
.row { display: flex; align-items: center; justify-content: space-between; height: 64px; margin-bottom: 16px; }
.field { width: 338px; height: 64px; border-radius: 8px; background: #e6e9ed; display: flex; align-items: center; justify-content: space-between; padding: 0 16px 0 24px; font-weight: 400; color: #686c70; fill: none; stroke: #85888c; stroke-width: 1.800; }
.field.var { padding-right: 0; overflow: hidden; }
.field.var i { width: 56px; height: 64px; background: #d7dbe1; display: grid; place-items: center; stroke: #14181c; stroke-width: 2.900; }
.field.var svg { width: 25px; height: 25px; }
.lab-dir { letter-spacing: .4px; }
.btns { display: flex; gap: 8px; width: 554px; height: 64px; }
.btns i { flex: 1; border-radius: 8px; background: #e6e9ed; display: grid; place-items: center; fill: #b2b6bb; color: #b2b6bb; }
.btns .chosen { fill: #12171c; }
.btns.full { width: auto; }
.btns.full svg { width: 48px; height: 48px; }
.btns.last { margin-bottom: 16px; }
.row:has(+ .label) { margin-bottom: 0; }
.glyph { width: 42px; height: 48px; border: solid #b2b6bb; border-width: 0 3px; font: 700 43px/48px Inter, sans-serif; display: flex; justify-content: center; letter-spacing: 0; }
.label { height: 72px; line-height: 72px; }
.search { position: relative; height: 100px; border-top: 2px solid #c4c5c9; background: #fafafc; box-shadow: 0 0 20px rgba(0, 0, 0, .22); padding: 0 32px; display: flex; align-items: center; justify-content: space-between; font-size: 26px; font-weight: 400; letter-spacing: .05px; color: #696c71; }
.search i { width: 48px; height: 48px; border-radius: 8px; background: #e6e9ed; display: grid; place-items: center; fill: none; stroke: #14181c; stroke-width: 3; }

.canvas { width: 2414px; background: #fff; }
.outline-section { position: relative; height: 736px; border: 2px solid #4a9cc8; padding-top: 275px; }
.outline-container { position: relative; width: 1600px; height: 181px; margin: 0 auto; border: 2px solid #4a9cc8; }
.actions { position: absolute; left: 714px; top: 156px; width: 168px; height: 42px; background: #1ea1e6; display: flex; align-items: center; justify-content: space-around; }
.actions svg { width: 24px; height: 24px; fill: none; stroke: #fff; stroke-width: 2.400; }
.tag { position: absolute; left: -2px; top: 733px; height: 40px; padding: 0 8px; background: #1ea1e6; color: #fff; font-size: 24px; line-height: 40px; letter-spacing: .1px; }
.cursor { position: absolute; left: 99px; top: 181px; width: 38px; height: 38px; filter: drop-shadow(0 3px 3px rgba(0, 0, 0, .4)); }

.structure { flex: 1; border-left: 2px solid #c9cacf; border-right: 2px solid #d0d1d5; font-size: 24px; letter-spacing: .4px; }
.structure .panel-head { height: 120px; }
.tree { padding: 32px 31px 0 16px; }
.node { display: flex; align-items: center; gap: 8px; fill: none; stroke: #8b8d91; stroke-width: 2; }
.item { flex: 1; height: 60px; border: 2px solid #bfc0c5; border-radius: 8px; display: flex; align-items: center; gap: 17px; padding-left: 15px; fill: none; }
.item.child { margin: 10px 0 0 62px; background: #fceaf2; color: #d63e80; stroke: #ea8fb6; stroke-width: 2; border: 0; padding-left: 18px; gap: 18px; }

/* floating screen recorder */
.recorder { position: absolute; left: 22px; top: 1211px; width: 112px; height: 316px; border-radius: 20px; background: #1b1c1e; box-shadow: 0 0 0 2px #050505; display: flex; flex-direction: column; align-items: center; padding-top: 36px; }
.mic, .stop { width: 80px; height: 80px; border-radius: 14px; display: grid; place-items: center; }
.mic { margin-top: 25px; background: #262626; }
.stop { margin-top: 7px; background: #df2317; }
.recorder time { margin-top: 15px; font: 400 24px/28px "Liberation Mono", monospace; color: #fff; -webkit-text-stroke: .6px #fff; }
.grip { margin-top: auto; margin-bottom: 2px; width: 60px; height: 2px; background: #444; }
```
